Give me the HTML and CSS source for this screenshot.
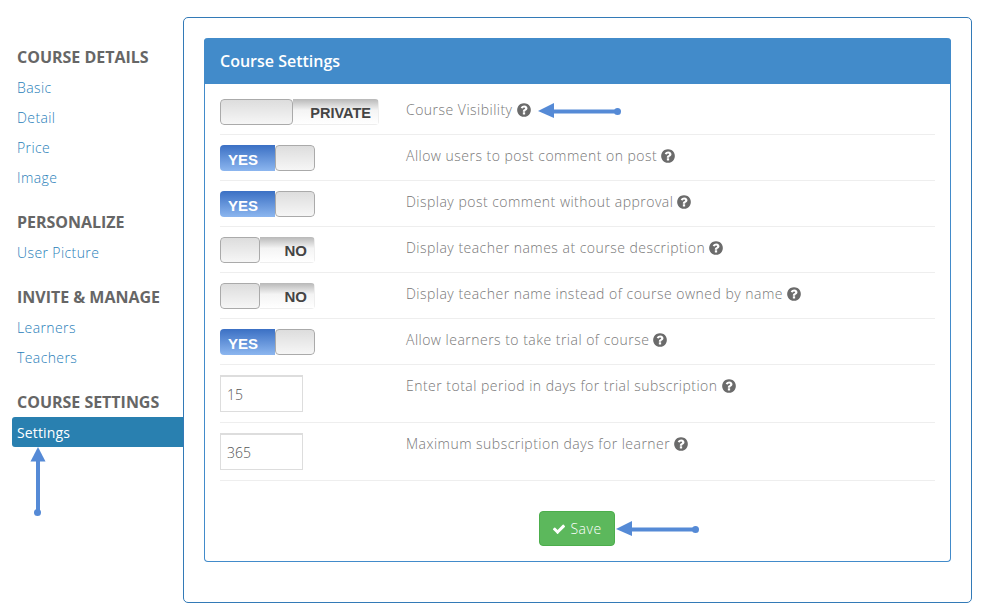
FILE: index.html
```html
<!doctype html>
<html lang="en">
<head>
<meta charset="utf-8">
<title>Course Settings</title>
<link rel="stylesheet" href="styles.css">
</head>
<body>
<svg class="defs" width="0" height="0">
  <symbol id="help" viewBox="0 0 1792 1792"><path d="M1024 1376v-192q0-14-9-23t-23-9h-192q-14 0-23 9t-9 23v192q0 14 9 23t23 9h192q14 0 23-9t9-23zm256-672q0-88-55.5-163t-138.5-116-170-41q-243 0-371 213-15 24 8 42l132 100q7 6 19 6 16 0 25-12 53-68 86-92 34-24 86-24 48 0 85.5 26t37.5 59q0 38-20 61t-68 45q-63 28-115.5 86.5t-52.5 125.5v36q0 14 9 23t23 9h192q14 0 23-9t9-23q0-19 21.5-49.5t54.5-49.5q32-18 49-28.5t46-35 44.5-48 28-60.5 12.5-81zm384 192q0 209-103 385.5t-279.5 279.5-385.5 103-385.5-103-279.5-279.5-103-385.5 103-385.5 279.5-279.5 385.5-103 385.5 103 279.5 279.5 103 385.5z"/></symbol>
</svg>

<div class="page">
  <nav class="sidebar">
    <h4>COURSE DETAILS</h4>
    <a href="#">Basic</a>
    <a href="#">Detail</a>
    <a href="#">Price</a>
    <a href="#">Image</a>
    <h4>PERSONALIZE</h4>
    <a href="#">User Picture</a>
    <h4>INVITE &amp; MANAGE</h4>
    <a href="#">Learners</a>
    <a href="#">Teachers</a>
    <h4>COURSE SETTINGS</h4>
    <a href="#" class="active">Settings</a>
  </nav>

  <main class="content">
    <section class="panel">
      <div class="panel-heading">Course Settings</div>
      <div class="panel-body">
        <div class="row">
          <div class="control"><span class="switch private off"><b class="handle"></b><b class="state">PRIVATE</b></span></div>
          <label>Course Visibility <svg class="help"><use href="#help"/></svg></label>
        </div>
        <div class="row">
          <div class="control"><span class="switch on"><b class="state">YES</b><b class="handle"></b></span></div>
          <label>Allow users to post comment on post <svg class="help"><use href="#help"/></svg></label>
        </div>
        <div class="row">
          <div class="control"><span class="switch on"><b class="state">YES</b><b class="handle"></b></span></div>
          <label>Display post comment without approval <svg class="help"><use href="#help"/></svg></label>
        </div>
        <div class="row">
          <div class="control"><span class="switch off"><b class="handle"></b><b class="state">NO</b></span></div>
          <label>Display teacher names at course description <svg class="help"><use href="#help"/></svg></label>
        </div>
        <div class="row">
          <div class="control"><span class="switch off"><b class="handle"></b><b class="state">NO</b></span></div>
          <label>Display teacher name instead of course owned by name <svg class="help"><use href="#help"/></svg></label>
        </div>
        <div class="row">
          <div class="control"><span class="switch on"><b class="state">YES</b><b class="handle"></b></span></div>
          <label>Allow learners to take trial of course <svg class="help"><use href="#help"/></svg></label>
        </div>
        <div class="row row-input">
          <div class="control"><input type="text" value="15"></div>
          <label>Enter total period in days for trial subscription <svg class="help"><use href="#help"/></svg></label>
        </div>
        <div class="row row-input">
          <div class="control"><input type="text" value="365"></div>
          <label>Maximum subscription days for learner <svg class="help"><use href="#help"/></svg></label>
        </div>
        <div class="actions">
          <button type="button" class="btn-save">
            <svg class="check" viewBox="0 0 1792 1792"><path d="M1671 566q0 40-28 68l-724 724-136 136q-28 28-68 28t-68-28l-136-136-362-362q-28-28-28-68t28-68l136-136q28-28 68-28t68 28l294 295 656-657q28-28 68-28t68 28l136 136q28 28 28 68z"/></svg>
            Save
          </button>
        </div>
      </div>
    </section>
  </main>
</div>

<!-- annotation arrows drawn over the screenshot -->
<svg class="arrows" width="1000" height="606" viewBox="0 0 1000 606">
  <path d="M552 109.500h65v4h-65z"/><path d="M538 111l16-8v15z"/><circle cx="617.500" cy="111.500" r="3.500"/>
  <path d="M630 527.500h66v4h-66z"/><path d="M616 529l16-8v15z"/><circle cx="695.500" cy="529.500" r="3.500"/>
  <path d="M36 459h4v53h-4z"/><path d="M38 447l-7.500 14.500h15z"/><circle cx="37.500" cy="512.500" r="3.500"/>
</svg>
</body>
</html>
```

FILE: styles.css
```css
html,body{margin:0;padding:0;background:#fff;}
body{font-family:"Open Sans",sans-serif;font-size:14px;height:606px;overflow:hidden;position:relative;}
.defs{position:absolute;}
.page{display:flex;align-items:flex-start;}

/* sidebar */
.sidebar{width:171px;margin-left:12px;padding-top:42px;flex:none;}
.sidebar h4{margin:15px 0 0;padding-left:5px;font-size:16px;line-height:30px;font-weight:700;color:#666;letter-spacing:-.02px;}
.sidebar h4:first-child{margin-top:0;}
.sidebar a{display:block;height:30px;line-height:32px;padding-left:5px;color:#2980b9;font-weight:300;letter-spacing:.4px;text-decoration:none;}
.sidebar a.active{background:#2980b0;color:#fff;font-weight:400;border-radius:3px 0 0 3px;letter-spacing:.15px;}

/* panels */
.content{box-sizing:border-box;width:789px;height:586px;margin-top:17px;padding:20px;border:1px solid #337ab7;border-radius:5px;}
.panel{box-sizing:border-box;width:747px;height:524px;border:1px solid #428bca;border-top:0;border-radius:4px;}
.panel-heading{height:46px;line-height:46px;margin:0 -1px;padding-left:16px;background:#428bca;color:#fff;font-size:16px;font-weight:600;border-radius:4px 4px 0 0;}
.panel-body{padding:0 15px;}

.row{display:flex;align-items:flex-start;padding:10px 0 9px;border-bottom:1px solid #eee;}
.row:first-child{padding-top:15px;}
.row-input{padding-bottom:10px;}
.control{width:186px;flex:none;}
.row label{padding-top:1px;line-height:20px;color:#777;font-weight:300;letter-spacing:.48px;display:flex;align-items:center;gap:3px;}
.help{width:16px;height:16px;fill:#6b6b6b;}

.row input{display:block;box-sizing:border-box;width:83px;height:37px;padding:0 6px;border:1px solid #ddd;border-top-width:2px;outline:0;font:300 14px "Open Sans",sans-serif;color:#555;}

/* toggle switches */
.switch{display:flex;box-sizing:border-box;width:95px;height:26px;border-radius:4px;overflow:hidden;font-family:"Liberation Sans",sans-serif;font-size:15px;}
.switch .state{flex:1;line-height:29px;}
.switch .handle{box-sizing:border-box;width:40px;flex:none;border:1px solid #aaa;border-radius:4px;background:linear-gradient(#ddd,#f6f6f6);}
.switch.on .state{padding-left:8px;color:#fff;background:linear-gradient(#3b70c4,#8cb6ef);}
.switch.off .state{padding-right:7px;text-align:right;line-height:28px;color:#444;background:linear-gradient(#b8b8b8,#f4f4f4 45%,#fff);border:solid #eee;border-width:0 1px 1px 0;}
.switch.private{width:159px;font-size:14.500px;}
.switch.private .handle{width:73px;}

/* save */
.actions{display:flex;justify-content:center;padding:30px 1px 0 0;}
.btn-save{display:flex;align-items:center;justify-content:center;gap:4px;box-sizing:border-box;width:76px;height:35px;padding:0;background:#5cb85c;border:1px solid #4cae4c;border-radius:4px;color:#fff;font:300 14px "Open Sans",sans-serif;letter-spacing:.5px;}
.check{width:14px;height:14px;fill:#fff;}

/* annotation layer */
.arrows{position:absolute;left:0;top:0;fill:#558ad6;pointer-events:none;}
```
